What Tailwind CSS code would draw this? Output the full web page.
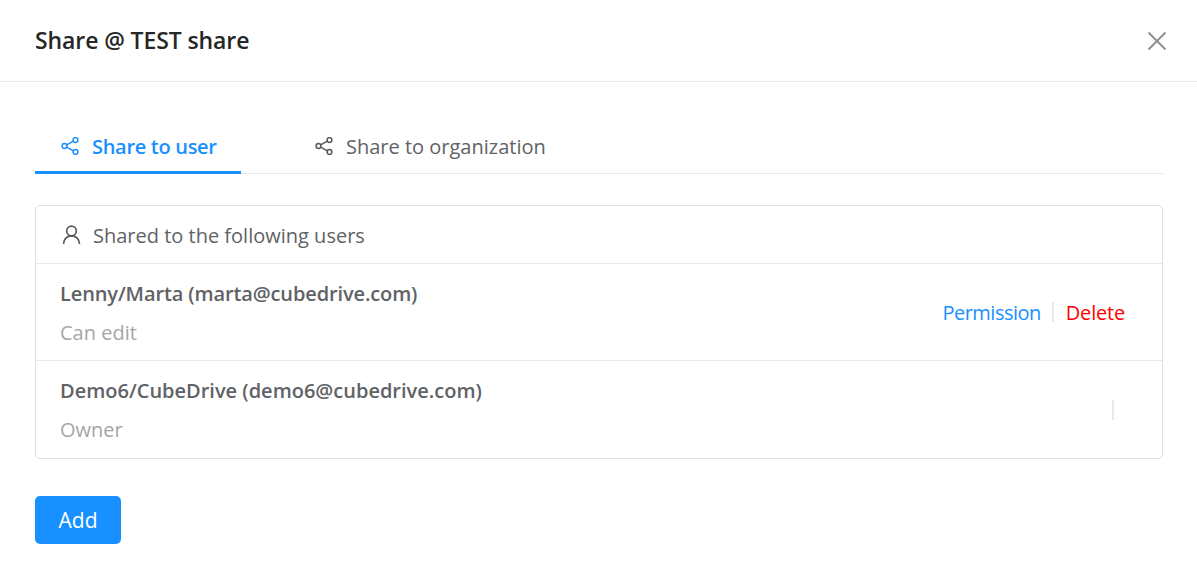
<!DOCTYPE html>
<html lang="en">
<head>
    <meta charset="UTF-8">
    <title>Share @ TEST share</title>
    <script src="https://cdn.jsdelivr.net/npm/@tailwindcss/browser@4"></script>
</head>
<body class="bg-white h-[579px] overflow-hidden font-['Open_Sans','Noto_Sans',sans-serif] text-[20px] text-[#606266]">
    <!-- Header -->
    <header class="h-[82px] border-b border-[#e8e8e8] pl-[35px] pr-[30px] flex items-center justify-between">
        <h1 class="text-[23px] font-semibold tracking-[-0.1px] text-[#262626]">Share @ TEST share</h1>
        <svg class="w-[20px] h-[20px] text-[#8c8c8c]" viewBox="0 0 20 20" fill="none" stroke="currentColor" stroke-width="1.8"><path d="M1.5 1.5 18.5 18.5M18.5 1.5 1.5 18.5"/></svg>
    </header>

    <main class="pl-[35px] pr-[34px] pt-[40px]">
        <!-- Tabs -->
        <div class="flex h-[52px] border-b border-[#e8e8e8]">
            <div class="w-[206px] h-[52px] border-b-[3px] border-[#1890ff] text-[#1890ff] font-semibold flex items-center gap-[13px] pl-[26px] pt-[1px]">
                <svg class="w-[18px] h-[18px] -mt-[2px]" viewBox="0 0 18 18" fill="none" stroke="currentColor" stroke-width="1.5"><circle cx="3.5" cy="9" r="2.4"/><circle cx="14.5" cy="3" r="2.4"/><circle cx="14.5" cy="15" r="2.4"/><path d="M5.6 7.8 12.4 4.2M5.6 10.2 12.4 13.8"/></svg>
                <span class="tracking-[-0.3px]">Share to user</span>
            </div>
            <div class="flex items-center gap-[14px] pl-[74px] h-[52px] pb-[3px]">
                <svg class="w-[18px] h-[18px] -mt-[1px]" viewBox="0 0 18 18" fill="none" stroke="#595959" stroke-width="1.5"><circle cx="3.5" cy="9" r="2.4"/><circle cx="14.5" cy="3" r="2.4"/><circle cx="14.5" cy="15" r="2.4"/><path d="M5.6 7.8 12.4 4.2M5.6 10.2 12.4 13.8"/></svg>
                <span class="-ml-[1px]">Share to organization</span>
            </div>
        </div>

        <!-- Users card -->
        <section class="mt-[31px] border border-[#dcdfe6] rounded-[5px]">
            <div class="h-[58px] border-b border-[#e8e8e8] flex items-center gap-[12px] pl-[26px]">
                <svg class="w-[19px] h-[20px]" viewBox="0 0 19 20" fill="none" stroke="#595959" stroke-width="1.7"><circle cx="9.5" cy="6" r="4.8"/><path d="M1.5 19c0-5 3.5-8.2 8-8.2s8 3.2 8 8.2"/></svg>
                <span class="pt-[2px]">Shared to the following users</span>
            </div>
            <div class="h-[97px] border-b border-[#e8e8e8] pl-[24px] pr-[37px] flex items-center justify-between">
                <div class="pt-[2px]">
                    <div class="font-semibold tracking-[-0.12px] leading-[28px]">Lenny/Marta (marta@cubedrive.com)</div>
                    <div class="text-[#a6a6a6] leading-[28px] mt-[11px]">Can edit</div>
                </div>
                <div class="flex items-center pt-[2px]">
                    <span class="text-[#1890ff] tracking-[-0.5px]">Permission</span>
                    <span class="w-[2px] h-[20px] bg-[#e8e8e8] ml-[11px] mr-[12px] -mt-[2px]"></span>
                    <span class="text-[#ff0000] tracking-[-0.2px]">Delete</span>
                </div>
            </div>
            <div class="h-[97px] pl-[24px] pr-[48px] flex items-center justify-between">
                <div class="pt-[2px]">
                    <div class="font-semibold leading-[28px]">Demo6/CubeDrive (demo6@cubedrive.com)</div>
                    <div class="text-[#a6a6a6] leading-[28px] mt-[11px]">Owner</div>
                </div>
                <span class="w-[2px] h-[20px] bg-[#e8e8e8]"></span>
            </div>
        </section>

        <button class="mt-[37px] w-[86px] h-[48px] rounded-[5px] bg-[#1890ff] text-white text-[21px] pt-[2px]">Add</button>
    </main>
</body>
</html>
